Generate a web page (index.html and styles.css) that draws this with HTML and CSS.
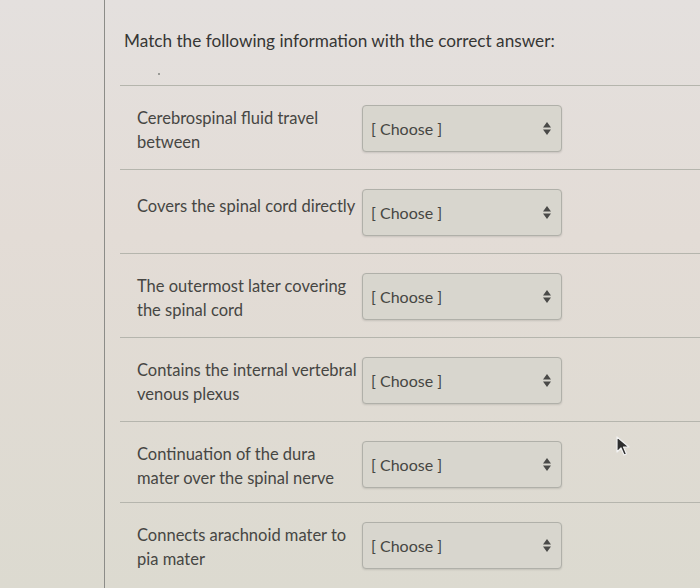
FILE: index.html
```html
<!DOCTYPE html>
<html lang="en">
<head>
    <meta charset="UTF-8">
    <meta name="viewport" content="width=device-width, initial-scale=1.0">
    <title>Matching Question</title>
    <link rel="stylesheet" href="styles.css">
</head>
<body>
    <div class="content">
        <div class="question">
            <p class="question-text">Match the following information with the correct answer:</p>
            <span class="dot"></span>
        </div>

        <div class="answer-row">
            <label class="answer-label" for="q1">Cerebrospinal fluid travel between</label>
            <div class="select-wrap">
                <select id="q1"><option>[ Choose ]</option></select>
                <svg class="arrows" width="8" height="13" viewBox="0 0 8 13"><path d="M4 0 L8 5.5 L0 5.5 Z M0 7.5 L8 7.5 L4 13 Z" fill="#4a4a48"/></svg>
            </div>
        </div>

        <div class="answer-row">
            <label class="answer-label single" for="q2">Covers the spinal cord directly</label>
            <div class="select-wrap">
                <select id="q2"><option>[ Choose ]</option></select>
                <svg class="arrows" width="8" height="13" viewBox="0 0 8 13"><path d="M4 0 L8 5.5 L0 5.5 Z M0 7.5 L8 7.5 L4 13 Z" fill="#4a4a48"/></svg>
            </div>
        </div>

        <div class="answer-row">
            <label class="answer-label" for="q3">The outermost later covering the spinal cord</label>
            <div class="select-wrap">
                <select id="q3"><option>[ Choose ]</option></select>
                <svg class="arrows" width="8" height="13" viewBox="0 0 8 13"><path d="M4 0 L8 5.5 L0 5.5 Z M0 7.5 L8 7.5 L4 13 Z" fill="#4a4a48"/></svg>
            </div>
        </div>

        <div class="answer-row">
            <label class="answer-label" for="q4">Contains the internal vertebral venous plexus</label>
            <div class="select-wrap">
                <select id="q4"><option>[ Choose ]</option></select>
                <svg class="arrows" width="8" height="13" viewBox="0 0 8 13"><path d="M4 0 L8 5.5 L0 5.5 Z M0 7.5 L8 7.5 L4 13 Z" fill="#4a4a48"/></svg>
            </div>
        </div>

        <div class="answer-row short">
            <label class="answer-label" for="q5">Continuation of the dura mater over the spinal nerve</label>
            <div class="select-wrap">
                <select id="q5"><option>[ Choose ]</option></select>
                <svg class="arrows" width="8" height="13" viewBox="0 0 8 13"><path d="M4 0 L8 5.5 L0 5.5 Z M0 7.5 L8 7.5 L4 13 Z" fill="#4a4a48"/></svg>
            </div>
        </div>

        <div class="answer-row last">
            <label class="answer-label" for="q6">Connects arachnoid mater to pia mater</label>
            <div class="select-wrap">
                <select id="q6"><option>[ Choose ]</option></select>
                <svg class="arrows" width="8" height="13" viewBox="0 0 8 13"><path d="M4 0 L8 5.5 L0 5.5 Z M0 7.5 L8 7.5 L4 13 Z" fill="#4a4a48"/></svg>
            </div>
        </div>
    </div>

    <svg class="cursor" width="16" height="20" viewBox="0 0 16 20">
        <path d="M1 1 L1 16 L5 12 L8 19 L10.5 18 L7.5 11 L13 11 Z" fill="#2e2e2e" stroke="#f2f2f2" stroke-width="1.2" stroke-linejoin="round"/>
    </svg>
</body>
</html>
```

FILE: styles.css
```css
body {
    margin: 0;
    height: 588px;
    overflow: hidden;
    font-family: Lato, "Open Sans", sans-serif;
    background: linear-gradient(to bottom, #e4e0de, #e3dcd6 40%, #dcdad0);
    color: #454542;
}

.content {
    margin-left: 104px;
    border-left: 1px solid #8c8c88;
    min-height: 588px;
    padding: 0 0 0 15px;
}

.question {
    position: relative;
    padding: 28px 0 0 4px;
    height: 57px;
    border-bottom: 1px solid #b5b5ad;
}

.question-text {
    margin: 0;
    font-size: 17.2px;
    line-height: 26px;
    color: #363634;
}

.dot {
    position: absolute;
    left: 38px;
    top: 73px;
    width: 2px;
    height: 2px;
    background: #9a9a96;
}

.answer-row {
    display: flex;
    align-items: flex-start;
    padding: 19px 0 0 17px;
    height: 64px;
    border-bottom: 1px solid #b5b5ad;
}

.answer-row.short {
    height: 61px;
}

.answer-row.last {
    border-bottom: none;
}

.answer-label {
    width: 222px;
    margin-right: 3px;
    padding-top: 1px;
    font-size: 16.5px;
    line-height: 24px;
    color: #464643;
}

.answer-label.single {
    padding-top: 5px;
}

.select-wrap {
    position: relative;
    width: 200px;
    height: 47px;
}

.select-wrap select {
    -webkit-appearance: none;
    appearance: none;
    width: 100%;
    height: 100%;
    padding: 0 0 0 8px;
    border: 1px solid #b0b0a9;
    border-radius: 4px;
    background: #d8d6ce;
    box-shadow: 0 1px 2px rgba(0, 0, 0, 0.12);
    font-family: Lato, "Open Sans", sans-serif;
    font-size: 16px;
    color: #464643;
}

.arrows {
    position: absolute;
    right: 11px;
    top: 17px;
}

.cursor {
    position: absolute;
    left: 616px;
    top: 436px;
}
```
